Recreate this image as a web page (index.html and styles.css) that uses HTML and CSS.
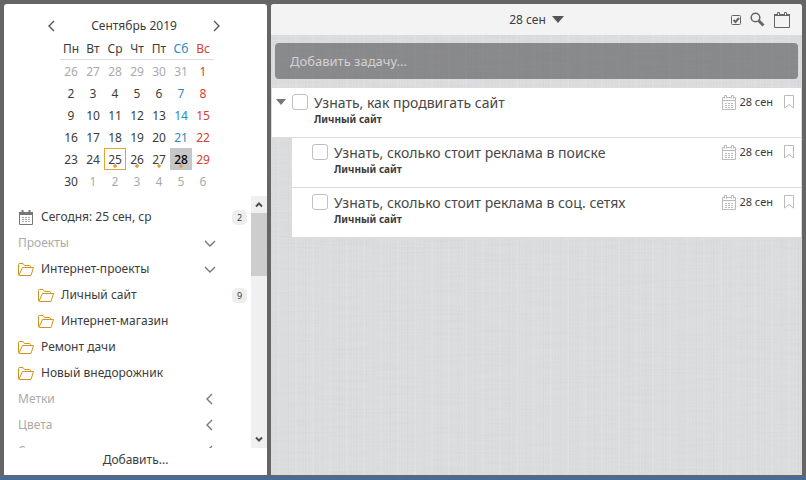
FILE: index.html
```html
<!DOCTYPE html>
<html lang="ru">
<head>
<meta charset="utf-8">
<title>Задачи</title>
<link rel="stylesheet" href="styles.css">
</head>
<body>
<svg class="defs" aria-hidden="true">
  <symbol id="folder" viewBox="0 0 16 13"><path d="M.5 11.500V1.500Q.5.500 1.500.500H5L6.500 2.500H11.500Q12.500 2.500 12.500 3.500V4.500M1 12L4.500 4.500H15.500L13 12.500H1.500Q.5 12.500.5 11.500"/></symbol>
  <symbol id="calendar" viewBox="0 0 14 15"><path d="M.5 2.500H2M5 2.500H9M12 2.500H13.500V14.500H.5V2.500M.5 5.500H13.500M2.500.5H4.500V3.500M2.500.5V3.500M9.500.5H11.500V3.500M9.500.5V3.500"/><path d="M3 8.500H11M3 10.500H11M3 12.500H11" stroke-dasharray="2 1"/></symbol>
  <symbol id="calendar-solid" viewBox="0 0 14 15"><path d="M.5 2.500H13.500V14.500H.5Z"/><path d="M0 2H14V5H0Z" fill="#777" stroke="none"/><path d="M3.500 0V3M10.500 0V3" stroke-width="2"/><path d="M3 7.500H11M3 9.500H11M3 11.500H11" stroke="#aaa" stroke-dasharray="2 1"/></symbol>
  <symbol id="bookmark" viewBox="0 0 10 14"><path d="M.5.5H9.500V13L5 9.500L.5 13Z"/></symbol>
  <symbol id="down" viewBox="0 0 12 7"><path d="M1 1L6 6L11 1"/></symbol>
  <symbol id="left" viewBox="0 0 7 12"><path d="M6 1L1 6L6 11"/></symbol>
  <symbol id="right" viewBox="0 0 7 12"><path d="M1 1L6 6L1 11"/></symbol>
  <filter id="fiber-x"><feTurbulence type="fractalNoise" baseFrequency=".02 .6" numOctaves="2" seed="3"/><feColorMatrix values="0 0 0 0 .5  0 0 0 0 .5  0 0 0 0 .52  .9 0 0 0 -.37"/></filter>
</svg>
<div class="app">
  <aside class="sidebar">
    <section class="month">
      <div class="month-nav">
        <button aria-label="Предыдущий месяц"><svg class="side-arrow"><use href="#left"/></svg></button>
        <span>Сентябрь 2019</span>
        <button aria-label="Следующий месяц"><svg class="side-arrow"><use href="#right"/></svg></button>
      </div>
      <table>
        <thead><tr><th>Пн</th><th>Вт</th><th>Ср</th><th>Чт</th><th>Пт</th><th class="sat">Сб</th><th class="sun">Вс</th></tr></thead>
        <tbody>
          <tr><td class="out">26</td><td class="out">27</td><td class="out">28</td><td class="out">29</td><td class="out">30</td><td class="out">31</td><td class="sun">1</td></tr>
          <tr><td>2</td><td>3</td><td>4</td><td>5</td><td>6</td><td class="sat">7</td><td class="sun">8</td></tr>
          <tr><td>9</td><td>10</td><td>11</td><td>12</td><td>13</td><td class="sat">14</td><td class="sun">15</td></tr>
          <tr><td>16</td><td>17</td><td>18</td><td>19</td><td>20</td><td class="sat">21</td><td class="sun">22</td></tr>
          <tr><td>23</td><td>24</td><td class="today busy">25</td><td class="busy">26</td><td class="busy">27</td><td class="selected busy">28</td><td class="sun">29</td></tr>
          <tr><td>30</td><td class="out">1</td><td class="out">2</td><td class="out">3</td><td class="out">4</td><td class="out">5</td><td class="out">6</td></tr>
        </tbody>
      </table>
    </section>
    <div class="scroll-area">
      <nav class="tree">
        <a class="row" href="#today"><svg class="cal-icon"><use href="#calendar-solid"/></svg><span>Сегодня: 25 сен, ср</span><b class="count">2</b></a>
        <button class="row group"><span>Проекты</span><svg class="down-arrow"><use href="#down"/></svg></button>
        <a class="row" href="#web"><svg class="folder-icon"><use href="#folder"/></svg><span>Интернет-проекты</span><svg class="down-arrow"><use href="#down"/></svg></a>
        <a class="row nested" href="#site"><svg class="folder-icon"><use href="#folder"/></svg><span>Личный сайт</span><b class="count">9</b></a>
        <a class="row nested" href="#shop"><svg class="folder-icon"><use href="#folder"/></svg><span>Интернет-магазин</span></a>
        <a class="row" href="#dacha"><svg class="folder-icon"><use href="#folder"/></svg><span>Ремонт дачи</span></a>
        <a class="row" href="#car"><svg class="folder-icon"><use href="#folder"/></svg><span>Новый внедорожник</span></a>
        <button class="row group"><span>Метки</span><svg class="side-arrow"><use href="#left"/></svg></button>
        <button class="row group"><span>Цвета</span><svg class="side-arrow"><use href="#left"/></svg></button>
        <button class="row group"><span>С</span><svg class="side-arrow"><use href="#left"/></svg></button>
      </nav>
      <div class="scrollbar">
        <svg viewBox="0 0 8 6"><path d="M1 5L4 2L7 5"/></svg>
        <div class="thumb"></div>
        <svg viewBox="0 0 8 6"><path d="M1 1L4 4L7 1"/></svg>
      </div>
    </div>
    <button class="add">Добавить...</button>
  </aside>
  <main class="board">
    <svg class="linen" aria-hidden="true"><rect width="100%" height="100%" filter="url(#fiber-x)" stroke="none"/></svg>
    <header class="toolbar">
      <button class="date">28 сен <svg viewBox="0 0 12 7"><path d="M0 0H12L6 7Z"/></svg></button>
      <div class="tools">
        <button aria-label="Выполненные"><svg width="10" height="10" viewBox="0 0 10 10"><rect x=".5" y=".5" width="9" height="9" rx="1"/><path d="M2.500 5L4.500 7L8 3" stroke-width="2"/></svg></button>
        <button aria-label="Поиск"><svg width="15" height="15" viewBox="0 0 15 15"><circle cx="5.500" cy="5.500" r="4.300" stroke-width="1.500"/><path d="M8.500 8.500L13.500 13.500" stroke-width="3"/></svg></button>
        <button aria-label="Календарь"><svg width="16" height="16" viewBox="0 0 16 16"><path d="M.5 2V15.500H15.500V2M0 3.500H16M0 2.500H3M6 2.500H10M13 2.500H16M3.500 3V.5H5.500V3M10.500 3V.5H12.500V3"/></svg></button>
      </div>
    </header>
    <input class="new-task" type="text" placeholder="Добавить задачу..." aria-label="Добавить задачу">
    <ul class="tasks">
      <li class="task parent">
        <button class="fold" aria-label="Свернуть"><svg viewBox="0 0 10 6"><path d="M0 0H10L5 6Z"/></svg></button>
        <input type="checkbox" id="t1">
        <div class="text"><label for="t1">Узнать, как продвигать сайт</label><strong>Личный сайт</strong></div>
        <div class="meta"><svg class="cal-icon"><use href="#calendar"/></svg><span>28 сен</span><svg class="mark"><use href="#bookmark"/></svg></div>
      </li>
      <li class="task child">
        <input type="checkbox" id="t2">
        <div class="text"><label for="t2">Узнать, сколько стоит реклама в поиске</label><strong>Личный сайт</strong></div>
        <div class="meta"><svg class="cal-icon"><use href="#calendar"/></svg><span>28 сен</span><svg class="mark"><use href="#bookmark"/></svg></div>
      </li>
      <li class="task child">
        <input type="checkbox" id="t3">
        <div class="text"><label for="t3">Узнать, сколько стоит реклама в соц. сетях</label><strong>Личный сайт</strong></div>
        <div class="meta"><svg class="cal-icon"><use href="#calendar"/></svg><span>28 сен</span><svg class="mark"><use href="#bookmark"/></svg></div>
      </li>
    </ul>
  </main>
</div>
</body>
</html>
```
FILE: styles.css
```css
* { box-sizing: border-box; }
body {
  margin: 0;
  height: 100vh;
  background: #656565;
  border-bottom: 4px solid #4a6c94;
  font: 12px/22px "Noto Sans", "Open Sans", sans-serif;
  color: #3c3c3c;
}
button {
  padding: 0;
  border: 0;
  background: none;
  font: inherit;
  color: inherit;
}
a { color: inherit; text-decoration: none; }
svg { flex: none; fill: none; stroke: #777; }
.defs { position: absolute; width: 0; height: 0; }

.app {
  display: flex;
  gap: 4px;
  height: 100%;
  padding: 4px 4px 1px;
}

.sidebar {
  flex: 0 0 263px;
  display: flex;
  flex-direction: column;
  background: #fff;
  border-radius: 3px 3px 0 0;
}
.month { width: 172px; margin: 11px auto 4px 44px; }
.month-nav {
  display: flex;
  align-items: center;
  justify-content: space-between;
  height: 22px;
}
.month-nav button { display: flex; }
.month-nav svg { stroke: #555; }
.side-arrow, .down-arrow { stroke-width: 1.4; }
.side-arrow { width: 7px; height: 12px; }
.down-arrow { width: 12px; height: 7px; }
table {
  width: 154px;
  margin: 0 0 0 12px;
  border-collapse: separate;
  border-spacing: 0;
  table-layout: fixed;
}
th, td { height: 22px; padding: 2px 0 0; line-height: 20px; text-align: center; font-weight: 400; }
th { height: 23px; border-bottom: 1px solid #ddd; }
.out { color: #aaa; }
.sat { color: #2a8ab8; }
.sun { color: #d8402f; }
.busy {
  background: radial-gradient(circle at 50% 18px, #ec9a2c 0 1px, #ec9a2c80 2px, transparent 2px);
}
.today { box-shadow: inset 0 0 0 1px #e2a52f; }
.selected { background-color: #c6c6ca; color: #000; font-weight: 500; }

.scroll-area { flex: 1; display: flex; min-height: 0; overflow: hidden; }
.tree { flex: 1; padding-top: 8px; overflow: hidden; }
.row {
  display: flex;
  align-items: center;
  width: 100%;
  height: 26px;
  padding: 0 4px 0 14px;
  gap: 7px;
  text-align: left;
}
.row.nested { padding-left: 34px; }
.row span { flex: 1; }
.group { color: #aaa; }
.row .down-arrow { margin-right: 31px; }
.row .side-arrow { margin-right: 34px; }
.folder-icon { width: 16px; height: 13px; stroke: #d0921f; }
.cal-icon { width: 14px; height: 15px; }
.row .cal-icon { margin: 0 1px; }
.count {
  width: 15px;
  height: 15px;
  border-radius: 5px;
  background: #eee;
  font: 9px/15px "Noto Sans", sans-serif;
  text-align: center;
}
.scrollbar {
  width: 16px;
  display: flex;
  flex-direction: column;
  align-items: center;
  background: #f0f0f0;
}
.scrollbar svg { width: 8px; height: 17px; stroke: #505050; stroke-width: 2; }
.thumb { width: 100%; height: 25%; margin-bottom: auto; background: #cdcdcd; }
.add { height: 27px; padding-bottom: 4px; line-height: 22px; }

.board {
  position: relative;
  z-index: 0;
  flex: 1;
  min-width: 0;
  border-radius: 3px 3px 0 0;
  overflow: hidden;
  background:
    repeating-linear-gradient(90deg, #ffffff10 0 1px, transparent 1px 3px),
    repeating-linear-gradient(90deg, #00000003 0 1px, transparent 1px 7px, #ffffff14 7px 9px, transparent 9px 17px),
    #dbdcde;
}
.linen {
  position: absolute;
  inset: 0;
  z-index: -1;
  width: 100%;
  height: 100%;
  opacity: .25;
}
.toolbar {
  display: grid;
  grid-template-columns: 1fr auto 1fr;
  align-items: center;
  height: 31px;
  padding: 0 12px;
  background: #f3f3f3;
}
.date { grid-column: 2; display: flex; align-items: center; gap: 6px; }
.date svg { width: 12px; height: 7px; fill: #555; stroke: none; }
.tools { display: flex; align-items: center; justify-content: flex-end; gap: 9px; }
.tools button { display: flex; }
.tools svg { stroke: #666; }

.new-task {
  display: block;
  width: calc(100% - 8px);
  height: 36px;
  margin: 8px 4px 9px;
  padding: 0 15px;
  border: 0;
  border-radius: 4px;
  background: #4b4b4d90;
  font: 13px "Noto Sans", "Open Sans", sans-serif;
  color: #fff;
}
.new-task::placeholder { color: #d2d2d2; opacity: 1; }

.tasks { margin: 0 1px; padding: 0; list-style: none; }
.task {
  display: flex;
  align-items: flex-start;
  height: 50px;
  padding: 6px 7px 0 20px;
  background: #fff;
  border-bottom: 1px solid #dcdcdc;
}
.task.parent { padding-left: 4px; }
.task.child { margin-left: 20px; }
.fold { display: flex; width: 16px; height: 16px; align-items: center; }
.fold svg { width: 10px; height: 6px; fill: #777; stroke: none; }
.task input {
  appearance: none;
  width: 16px;
  height: 16px;
  margin: 0 6px 0 0;
  border: 1px solid #bfbfbf;
  border-radius: 3px;
  background: #fff;
}
.text { flex: 1; display: flex; flex-direction: column; }
.text label { font-size: 14px; line-height: 18px; color: #484848; }
.text strong { font-size: 10px; line-height: 14px; }
.meta { display: flex; align-items: center; height: 16px; gap: 3px; font-size: 11px; }
.meta svg { stroke: #bbb; }
.meta .mark { width: 10px; height: 14px; margin-left: 8px; }
```
